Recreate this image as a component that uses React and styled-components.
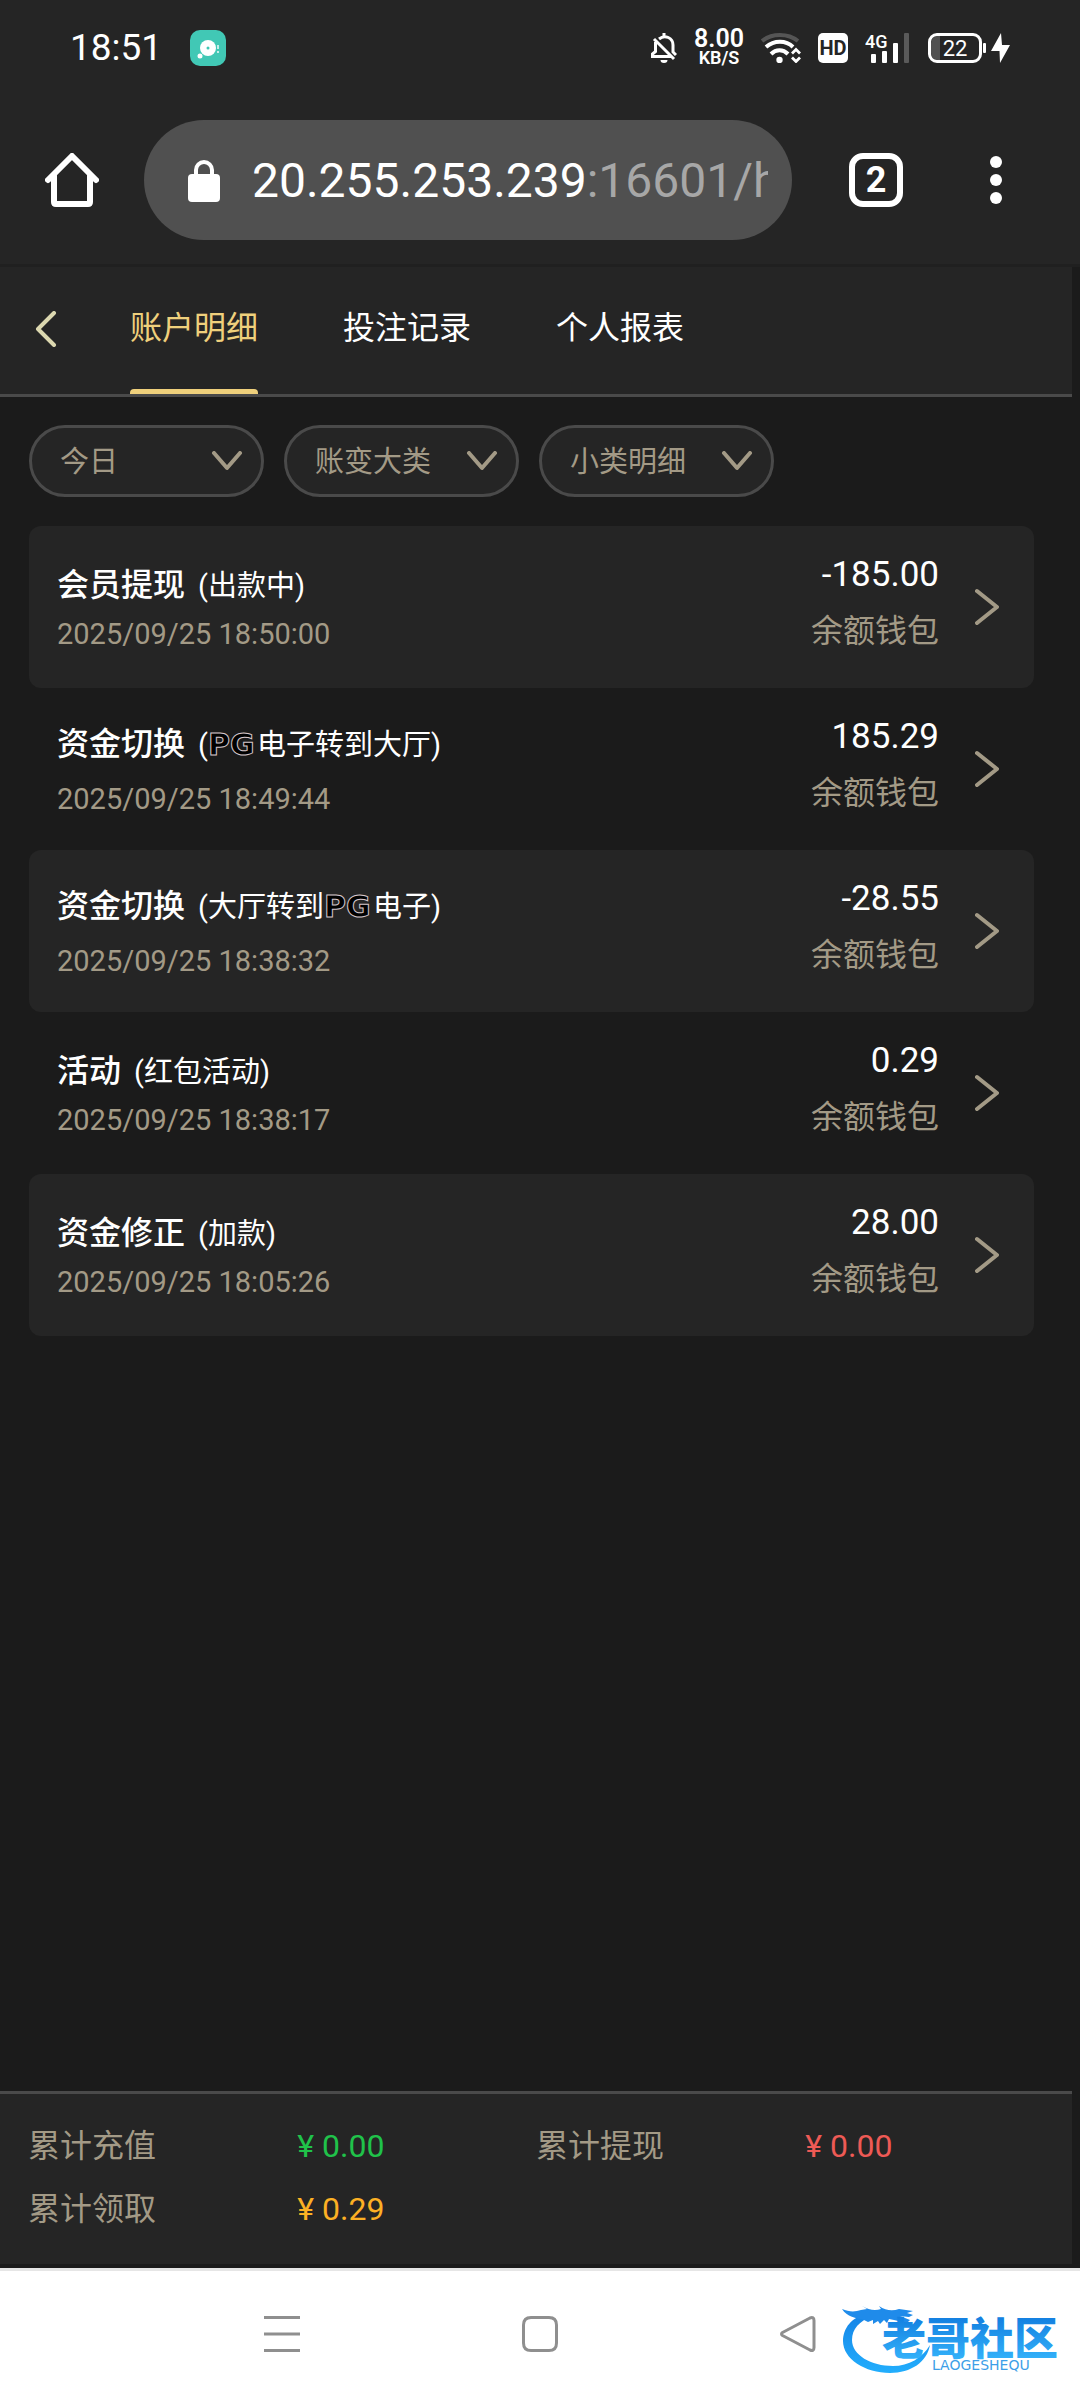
import React, { useState } from 'react'
import styled, { createGlobalStyle } from 'styled-components'

const panel = '#252525'
const page = '#1b1b1b'
const line = '#4a4a4a'
const muted = '#a39a86'
const gold = '#efd07c'

const GlobalStyle = createGlobalStyle`
	* {
		box-sizing: border-box;
	}
	body {
		margin: 0;
		background: ${page};
		font-family: Roboto, "Noto Sans CJK SC", sans-serif;
	}
	button, select {
		margin: 0;
		padding: 0;
		border: 0;
		background: none;
		color: inherit;
		font: inherit;
	}
	svg {
		display: block;
		flex: none;
	}
`

const Screen = styled.div`
	display: flex;
	flex-direction: column;
	min-height: 100vh;
	color: white;
`

const StatusBar = styled.div`
	display: flex;
	align-items: center;
	justify-content: space-between;
	height: 96px;
	padding: 0 70px;
	background: ${panel};
`

const StatusGroup = styled.div`
	display: flex;
	align-items: center;
	gap: ${props => props.$gap}px;
`

const Clock = styled.span`
	font-size: 37px;
	line-height: 48px;
`

const Speed = styled.div`
	display: flex;
	flex-direction: column;
	align-items: center;
	font-size: 25px;
	line-height: 20px;
	font-weight: 600;
`

const SpeedUnit = styled.span`
	font-size: 18px;
	line-height: 18px;
`

const HdBadge = styled.span`
	width: 30px;
	height: 30px;
	border-radius: 5px;
	background: white;
	color: ${panel};
	font-size: 20px;
	line-height: 30px;
	font-weight: 700;
	text-align: center;
`

const Toolbar = styled.div`
	display: flex;
	align-items: center;
	height: 171px;
	padding: 0 57px 0 45px;
	border-bottom: 3px solid #202020;
	background: ${panel};
`

const AddressBar = styled.button`
	display: flex;
	flex: 1;
	align-items: center;
	gap: 32px;
	min-width: 0;
	height: 120px;
	margin: 0 57px 0 45px;
	padding: 2px 24px 0 44px;
	border-radius: 60px;
	background: #505050;
`

const Url = styled.span`
	flex: 1;
	min-width: 0;
	overflow: hidden;
	font-size: 48px;
	line-height: 60px;
	text-align: left;
	white-space: nowrap;
`

const UrlRest = styled.span`
	color: #a7a7a7;
`

const ToolbarActions = styled.div`
	display: flex;
	gap: 66px;
`

const TabCount = styled.button`
	width: 54px;
	height: 54px;
	border: 6px solid white;
	border-radius: 14px;
	font-size: 36px;
	line-height: 42px;
	font-weight: 700;
	text-align: center;
`

const Main = styled.main`
	display: flex;
	flex: 1;
	flex-direction: column;
	margin-right: 8px;
`

const Header = styled.header`
	display: flex;
	height: 130px;
	padding-left: 35px;
	border-bottom: 3px solid ${line};
	background: ${panel};
`

const BackButton = styled.button`
	width: 95px;
	padding-bottom: 4px;
`

const Tabs = styled.nav`
	display: flex;
	gap: 85px;
`

const Tab = styled.button`
	padding-bottom: 5px;
	color: ${props => props.$active ? gold : 'white'};
	font-size: 32px;
	line-height: 48px;
	position: relative;

	&::after {
		content: '';
		display: ${props => props.$active ? 'block' : 'none'};
		position: absolute;
		left: 0;
		right: 0;
		bottom: 0;
		height: 5px;
		border-radius: 4px 4px 0 0;
		background: ${gold};
	}
`

const Filters = styled.div`
	display: flex;
	gap: 20px;
	padding: 28px 29px;
`

const Filter = styled.label`
	display: grid;
	grid-template-columns: 1fr 50px;
	align-items: center;
	width: 235px;
	height: 72px;
	border: 3px solid ${line};
	border-radius: 36px;
	background: ${panel};
	color: ${muted};

	svg {
		grid-area: 1 / 2;
		pointer-events: none;
	}
`

const FilterSelect = styled.select`
	grid-area: 1 / 1 / 2 / 3;
	height: 66px;
	padding: 2px 0 0 28px;
	appearance: none;
	outline: none;
	font-size: 29px;
`

const List = styled.ul`
	flex: 1;
	margin: 0;
	padding: 1px 38px 0 29px;
	list-style: none;
`

const Item = styled.li`
	border-radius: 12px;

	&:nth-child(odd) {
		background: ${panel};
	}
`

const ItemButton = styled.button`
	display: flex;
	align-items: center;
	width: 100%;
	height: 162px;
	padding: 0 35px 0 28px;
	text-align: left;
`

const Summary = styled.div`
	display: flex;
	flex: 1;
	flex-direction: column;
	gap: ${props => props.$tall ? 8 : 2}px;
	padding-top: 5px;
	line-height: 46px;
`

const Title = styled.div`
	display: flex;
	align-items: baseline;
	gap: 13px;
`

const Kind = styled.strong`
	font-size: 32px;
	font-weight: 500;
`

const Detail = styled.span`
	font-size: 29px;
`

const Pg = styled.span`
	display: inline-block;
	width: 49px;
	color: black;
	font-family: "DejaVu Sans", sans-serif;
	font-size: 30px;
	line-height: 32px;
	font-weight: 700;
	-webkit-text-stroke: 1px #d6c8cc;
`

const Time = styled.time`
	color: ${muted};
	font-size: 29px;
`

const Money = styled.div`
	display: flex;
	flex-direction: column;
	align-items: flex-end;
	margin-right: 36px;
	padding-bottom: 8px;
	line-height: 57px;
`

const Amount = styled.span`
	font-size: 35px;
`

const Wallet = styled.span`
	color: ${muted};
	font-size: 32px;
`

const Totals = styled.footer`
	display: grid;
	grid-template-columns: 1fr 1fr;
	margin-bottom: 4px;
	padding: 21px 28px 23px;
	border-top: 3px solid ${line};
	background: ${panel};
	font-size: 32px;
	line-height: 63px;
`

const Total = styled.div`
	display: grid;
	grid-template-columns: 53% 47%;
	color: ${muted};
`

const TotalValue = styled.span`
	color: ${props => props.$color};
`

const NavBar = styled.nav`
	display: flex;
	align-items: center;
	justify-content: center;
	gap: 222px;
	height: 132px;
	padding-bottom: 3px;
	border-top: 3px solid #e6e6e6;
	background: white;
	position: relative;
`

const Watermark = styled.svg`
	position: absolute;
	right: 0;
	bottom: 0;
`

const tabs = ['账户明细', '投注记录', '个人报表']
const filters = [
	{ label: '日期', value: '今日' },
	{ label: '大类', value: '账变大类' },
	{ label: '小类', value: '小类明细' }
]
const records = [
	{ kind: '会员提现', detail: '(出款中)', time: '2025/09/25 18:50:00', amount: '-185.00' },
	{ kind: '资金切换', detail: <>(<Pg>PG</Pg>电子转到大厅)</>, tall: true, time: '2025/09/25 18:49:44', amount: '185.29' },
	{ kind: '资金切换', detail: <>(大厅转到<Pg>PG</Pg>电子)</>, tall: true, time: '2025/09/25 18:38:32', amount: '-28.55' },
	{ kind: '活动', detail: '(红包活动)', time: '2025/09/25 18:38:17', amount: '0.29' },
	{ kind: '资金修正', detail: '(加款)', time: '2025/09/25 18:05:26', amount: '28.00' }
]
const totals = [
	{ label: '累计充值', value: '¥ 0.00', color: '#20c24a' },
	{ label: '累计提现', value: '¥ 0.00', color: '#ee5a55' },
	{ label: '累计领取', value: '¥ 0.29', color: '#fcb024' }
]

const AppIcon = () => (
	<svg width="36" height="36" viewBox="0 0 36 36">
		<rect width="36" height="36" rx="10" fill="#41c8b5" />
		<circle cx="18" cy="18" r="8" fill="white" />
		<circle cx="18" cy="18" r="1.5" fill="#41c8b5" />
		<circle cx="10" cy="26" r="2.5" fill="white" />
		<path d="M28 15v4M28 21v2" stroke="white" strokeWidth="2" opacity=".7" />
	</svg>
)

const BellOff = () => (
	<svg width="26" height="30" viewBox="0 0 26 30" fill="none" stroke="white" strokeWidth="3">
		<path d="M13 0v3M8 6c6-5 14-1 14 6v7l3 3" />
		<path d="M4.500 9v9.500L1.500 21v2.500H20M3 6l20 20" />
		<path d="M9.500 27h7a3.500 3 0 0 1-7 0z" fill="white" stroke="none" />
	</svg>
)

const Wifi = () => (
	<svg width="40" height="30" viewBox="0 0 40 30" fill="none" stroke="white" strokeWidth="4">
		<path d="M1 8c10-8 26-8 36 0" stroke="#555" />
		<path d="M5 14c8-7 20-7 27 0" />
		<path d="M10 21c5-5 12-5 17 0" />
		<circle cx="18.500" cy="27" r="3.200" fill="white" stroke="none" />
		<path d="M31 20.500l4-4 4 4M31 24.500l4 4 4-4" strokeWidth="2.800" />
	</svg>
)

const Signal = () => (
	<svg width="46" height="32" viewBox="0 0 46 32" fill="white">
		<text x="0" y="16" fontSize="18" fontWeight="500" fontFamily="Roboto, sans-serif">4G</text>
		<rect x="6" y="22" width="5" height="9" rx="1" />
		<rect x="17" y="19" width="5" height="12" rx="1" />
		<rect x="28" y="11" width="5" height="20" rx="1" />
		<rect x="39" y="1" width="5" height="30" rx="1" fill="#5a5a5a" />
	</svg>
)

const Battery = () => (
	<svg width="82" height="30" viewBox="0 0 82 30">
		<path d="M10 3h2v24h-2a7 7 0 0 1-7-7V10a7 7 0 0 1 7-7z" fill="#505050" />
		<rect x="1.500" y="1.500" width="51" height="27" rx="7.500" fill="none" stroke="white" strokeWidth="3" />
		<rect x="55" y="10" width="3" height="10" rx="1" fill="white" />
		<text x="27" y="23" textAnchor="middle" fontSize="22" fill="white" fontFamily="Roboto, sans-serif">22</text>
		<path d="M73 0L63 18h8.500L72 30l10-18h-8z" fill="white" />
	</svg>
)

const Home = () => (
	<svg width="54" height="54" viewBox="0 0 54 54" fill="none" stroke="white" strokeWidth="6" strokeLinecap="round" strokeLinejoin="round">
		<path d="M3 27L27 3l24 24" />
		<path d="M9 23v26q0 2 2 2h32q2 0 2-2V23" />
	</svg>
)

const Lock = () => (
	<svg width="32" height="42" viewBox="0 0 32 42">
		<rect y="14" width="32" height="28" rx="4" fill="white" />
		<path d="M8 15v-5a8 8 0 0 1 16 0v5" fill="none" stroke="white" strokeWidth="4" />
	</svg>
)

const Dots = () => (
	<svg width="54" height="54" viewBox="0 0 54 54" fill="white">
		<circle cx="27" cy="9" r="6" />
		<circle cx="27" cy="27" r="6" />
		<circle cx="27" cy="45" r="6" />
	</svg>
)

const Chevron = ({ width, height, d, color = muted }) => (
	<svg width={width} height={height} viewBox={`0 0 ${width} ${height}`} fill="none" stroke={color} strokeWidth="4" strokeLinecap="round" strokeLinejoin="round">
		<path d={d} />
	</svg>
)

const NavIcon = ({ d }) => (
	<svg width="36" height="36" viewBox="0 0 36 36" fill="none" stroke="#8f8f8f" strokeWidth="3" strokeLinejoin="round">
		<path d={d} />
	</svg>
)

const Community = () => (
	<Watermark width="260" height="120" viewBox="0 0 260 120">
		<defs>
			<linearGradient id="ring" x1="0" y1="0" x2="0" y2="1">
				<stop offset="0" stopColor="#1583e6" />
				<stop offset="1" stopColor="#22aefd" />
			</linearGradient>
			<linearGradient id="word" x1="0" y1="0" x2="0" y2="1">
				<stop offset=".2" stopColor="#137fe0" />
				<stop offset=".9" stopColor="#35b4fb" />
			</linearGradient>
		</defs>
		<path d="M50 33C31 36 23 49 23 61c0 18 22 32 47 32 21 0 37-11 40-28-8 13-21 21-37 21-22 0-41-11-41-26 0-11 7-19 21-24z" fill="url(#ring)" />
		<path d="M22 29c7 3 13 3 19 1l6-1-5-3c7 4 13 5 19 3l-2-3c7 5 14 5 20 3l14 2-6 2 6 2-4 2-9-1 10 4-3 3-13-3-5-1-2 4-3-3-4 4-2-3-5 3v-4l-5 2-4-2c-8-2-17-3-22-11z" fill="#1f8bea" />
		<text x="62" y="75" fontSize="44" fontWeight="900" fill="url(#word)" fontFamily="'Noto Sans CJK SC', sans-serif">老哥社区</text>
		<text x="112" y="90" fontSize="14" fill="#3d9fe8" fontFamily="'DejaVu Sans', sans-serif">LAOGESHEQU</text>
	</Watermark>
)

export default function App () {
	const [active, setActive] = useState(tabs[0])
	return (
		<Screen>
			<GlobalStyle />
			<StatusBar>
				<StatusGroup $gap={28}>
					<Clock>18:51</Clock>
					<AppIcon />
				</StatusGroup>
				<StatusGroup $gap={17}>
					<BellOff />
					<Speed>8.00<SpeedUnit>KB/S</SpeedUnit></Speed>
					<Wifi />
					<HdBadge>HD</HdBadge>
					<Signal />
					<Battery />
				</StatusGroup>
			</StatusBar>
			<Toolbar>
				<button aria-label="Home"><Home /></button>
				<AddressBar>
					<Lock />
					<Url>20.255.253.239<UrlRest>:16601/h</UrlRest></Url>
				</AddressBar>
				<ToolbarActions>
					<TabCount>2</TabCount>
					<button aria-label="Menu"><Dots /></button>
				</ToolbarActions>
			</Toolbar>
			<Main>
				<Header>
					<BackButton aria-label="返回">
						<Chevron width={22} height={36} d="M19 2L3 18l16 16" color="#dcd8b0" />
					</BackButton>
					<Tabs>
						{tabs.map(tab => (
							<Tab key={tab} $active={tab === active} onClick={() => setActive(tab)}>{tab}</Tab>
						))}
					</Tabs>
				</Header>
				<Filters>
					{filters.map(({ label, value }) => (
						<Filter key={label}>
							<FilterSelect aria-label={label}>
								<option>{value}</option>
							</FilterSelect>
							<Chevron width={32} height={20} d="M3 2l13 15L29 2" />
						</Filter>
					))}
				</Filters>
				<List>
					{records.map(({ kind, detail, tall, time, amount }) => (
						<Item key={time}>
							<ItemButton>
								<Summary $tall={tall}>
									<Title>
										<Kind>{kind}</Kind>
										<Detail>{detail}</Detail>
									</Title>
									<Time>{time}</Time>
								</Summary>
								<Money>
									<Amount>{amount}</Amount>
									<Wallet>余额钱包</Wallet>
								</Money>
								<Chevron width={24} height={38} d="M2 3l20 16L2 35" />
							</ItemButton>
						</Item>
					))}
				</List>
				<Totals>
					{totals.map(({ label, value, color }) => (
						<Total key={label}>
							<span>{label}</span>
							<TotalValue $color={color}>{value}</TotalValue>
						</Total>
					))}
				</Totals>
			</Main>
			<NavBar>
				<button aria-label="Recent apps"><NavIcon d="M0 1.500h36M0 18h36M0 34.500h36" /></button>
				<button aria-label="Home screen"><NavIcon d="M9 1.500h18q7.500 0 7.500 7.500v18q0 7.500-7.500 7.500H9q-7.500 0-7.500-7.500V9q0-7.500 7.500-7.500z" /></button>
				<button aria-label="Back"><NavIcon d="M2.500 16.500L30 2q4-1.500 4 2.500v27q0 4-4 2.500L2.500 19.500q-2-1.500 0-3z" /></button>
				<Community />
			</NavBar>
		</Screen>
	)
}
